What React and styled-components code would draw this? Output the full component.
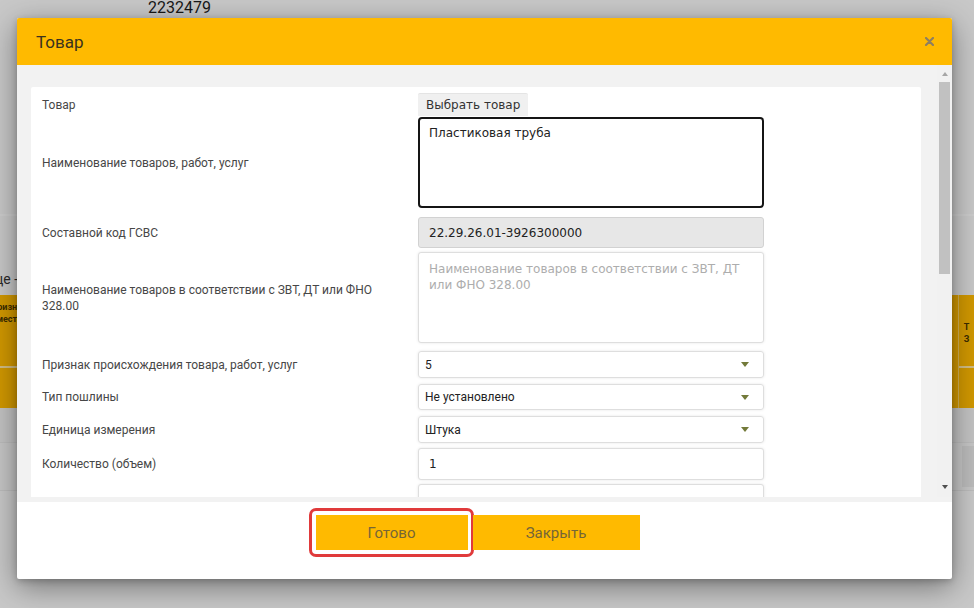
import React from "react";
import styled, { createGlobalStyle } from "styled-components";

const GlobalStyle = createGlobalStyle`
  html, body {
    margin: 0;
    padding: 0;
  }
  body {
    font-family: Roboto, "Liberation Sans", Arial, sans-serif;
    background: #f4f4f4;
    overflow: hidden;
  }
  * {
    box-sizing: border-box;
  }
`;

/* ---------- page behind the dialog ---------- */

const Page = styled.div`
  position: relative;
  width: 974px;
  height: 608px;
  overflow: hidden;
  background: #f4f4f4;
`;

const DocNumber = styled.div`
  height: 216px;
  padding-left: 148px;
  font-size: 16px;
  line-height: 16px;
  color: #1d1d1d;
  border-bottom: 2px solid #fbfbfb;
`;

const CaptionRow = styled.div`
  height: 79px;
  display: flex;
  align-items: flex-end;
  padding-bottom: 8px;
`;

const Caption = styled.div`
  width: 18px;
  display: flex;
  justify-content: flex-end;
  white-space: nowrap;
  font-size: 14px;
  color: #333;
`;

const TableHead = styled.div`
  display: flex;
  height: 113px;
  background: #ffba00;
`;

const HeadCell = styled.div`
  flex: ${(p) => (p.$grow ? 1 : "none")};
  width: ${(p) => p.$w || "auto"};
  margin-left: ${(p) => p.$ml || 0};
  display: grid;
  grid-template-rows: 73px 1fr;
  border-left: ${(p) => (p.$line ? "1px solid #ffd766" : "none")};
`;

const HeadTop = styled.div`
  padding-top: ${(p) => p.$pt || 8}px;
  font-size: 9px;
  font-weight: 700;
  line-height: 12px;
  color: #4a3600;
  text-align: center;
  border-bottom: 2px solid #ffe7a3;
`;

const BodyRow = styled.div`
  height: ${(p) => p.$h}px;
  background: ${(p) => p.$bg};
  border-bottom: 1px solid ${(p) => p.$line || "#e6e6e6"};
  display: flex;
  justify-content: flex-end;
`;

const RowBox = styled.div`
  width: 12px;
  margin: 3px 0;
  background: #e6e6e6;
`;

const Dim = styled.div`
  position: absolute;
  inset: 0;
  background: rgba(0, 0, 0, 0.18);
`;

/* ---------- dialog ---------- */

const Modal = styled.div`
  position: absolute;
  top: 18px;
  left: 17px;
  width: 935px;
  height: 561px;
  display: flex;
  flex-direction: column;
  background: #fff;
  border-radius: 2px;
  box-shadow: 0 8px 30px rgba(0, 0, 0, 0.42), 0 2px 6px rgba(0, 0, 0, 0.2);
  overflow: hidden;
`;

const Header = styled.div`
  flex: none;
  height: 47px;
  display: flex;
  align-items: center;
  justify-content: space-between;
  padding: 0 18px 0 19px;
  background: #ffba00;
`;

const Title = styled.h3`
  margin: 0;
  font-size: 17px;
  font-weight: 400;
  color: #3a321f;
`;

const Close = styled.button`
  display: flex;
  padding: 0;
  border: 0;
  background: none;
  cursor: pointer;
`;

const Body = styled.div`
  flex: 1;
  min-height: 0;
  display: flex;
  background: #f2f2f2;
`;

const Scroller = styled.div`
  flex: 1;
  overflow: hidden;
  padding: 22px 16px 0 14px;
`;

const Panel = styled.div`
  background: #fff;
  border-radius: 2px;
  padding: 6px 11px 24px;
`;

const Field = styled.div`
  display: grid;
  grid-template-columns: 376px 346px;
  align-items: center;
  margin-top: ${(p) => p.$mt || 0}px;
`;

const Label = styled.label`
  padding-right: 30px;
  font-size: 12px;
  line-height: 16px;
  color: #474747;
`;

const PickButton = styled.button`
  justify-self: start;
  height: 23px;
  padding: 0 8px;
  border: 0;
  border-top: 1px solid #e4e4e4;
  border-radius: 2px 2px 0 0;
  background: #f0f0f0;
  font: 12px "DejaVu Sans", Verdana, sans-serif;
  color: #333;
`;

const TextArea = styled.textarea`
  display: block;
  height: 91px;
  resize: none;
  font: 12px/16px "DejaVu Sans", Verdana, sans-serif;
  color: #222;
  border-radius: ${(p) => (p.$focused ? 4 : 3)}px;
  border: ${(p) => (p.$focused ? "2px solid #151515" : "1px solid #dedede")};
  padding: ${(p) => (p.$focused ? "6px 9px" : "8px 10px")};
  box-shadow: ${(p) => (p.$focused ? "none" : "0 0 3px rgba(0, 0, 0, 0.1)")};
  outline: none;

  &::placeholder {
    color: #adadad;
  }
`;

const TextInput = styled.input`
  display: block;
  height: ${(p) => p.$h || 32}px;
  padding: 0 10px;
  font: 12px "DejaVu Sans", Verdana, sans-serif;
  color: #222;
  border: 1px solid ${(p) => (p.readOnly ? "#d2d2d2" : "#dedede")};
  border-radius: 3px;
  background: ${(p) => (p.readOnly ? "#e7e7e7" : "#fff")};
  box-shadow: ${(p) => (p.readOnly ? "none" : "0 0 3px rgba(0, 0, 0, 0.1)")};
  outline: none;
`;

const Select = styled.div`
  height: ${(p) => p.$h || 27}px;
  display: flex;
  align-items: center;
  justify-content: space-between;
  padding: 0 14px 0 6px;
  font-size: 12px;
  color: #222;
  border: 1px solid #dedede;
  border-radius: 3px;
  box-shadow: 0 0 3px rgba(0, 0, 0, 0.1);
`;

const Caret = styled.span`
  width: 0;
  height: 0;
  border-left: 4px solid transparent;
  border-right: 4px solid transparent;
  border-top: 5px solid #737a3a;
`;

const Scrollbar = styled.div`
  flex: none;
  width: 15px;
  display: flex;
  flex-direction: column;
  align-items: center;
  padding: 7px 0 8px;
  background: #f1f1f1;
`;

const Arrow = styled.span`
  width: 0;
  height: 0;
  border-left: 3.5px solid transparent;
  border-right: 3.5px solid transparent;
  ${(p) =>
    p.$down
      ? "border-top: 4px solid #4f4f4f; margin-top: auto;"
      : "border-bottom: 4px solid #a6a6a6;"}
`;

const Thumb = styled.div`
  width: 11px;
  height: 192px;
  margin-top: 6px;
  background: #c1c1c1;
`;

const Footer = styled.div`
  flex: none;
  height: 82px;
  display: flex;
  justify-content: center;
  gap: 5px;
  padding: 13px 14px 0 0;
  border-top: 5px solid #f2f2f2;
`;

const ActionButton = styled.button`
  position: relative;
  width: ${(p) => p.$w}px;
  height: 35px;
  border: 0;
  background: #ffba00;
  font: 15px Roboto, "Liberation Sans", sans-serif;
  color: #766637;
  cursor: pointer;

  ${(p) =>
    p.$marked &&
    `
    &::after {
      content: "";
      position: absolute;
      inset: -7px -6px -7px -7px;
      border: 3px solid #e03a3b;
      border-radius: 7px;
    }
  `}
`;

function CloseIcon() {
  return (
    <svg width="9" height="9" viewBox="0 0 9 9">
      <path d="M1 1 L8 8 M8 1 L1 8" stroke="#8e7f60" strokeWidth="2.2" strokeLinecap="round" />
    </svg>
  );
}

export default function App() {
  return (
    <Page>
      <GlobalStyle />
      <DocNumber>2232479</DocNumber>
      <CaptionRow>
        <Caption>Товары на странице -</Caption>
      </CaptionRow>
      <TableHead>
        <HeadCell $w="60px" $ml="-21px">
          <HeadTop $pt={6}>Признак<br />места</HeadTop>
          <div />
        </HeadCell>
        <HeadCell $grow />
        <HeadCell $w="16px" $line>
          <HeadTop $pt={26}>Т<br />З</HeadTop>
          <div />
        </HeadCell>
      </TableHead>
      <BodyRow $h={35} $bg="#eeeeee" />
      <BodyRow $h={48} $bg="#f2f2f2">
        <RowBox />
      </BodyRow>
      <BodyRow $h={30} $bg="#f4f4f4" $line="#f4f4f4" />
      <BodyRow $h={40} $bg="#f4f4f4" $line="#f4f4f4" />
      <Dim />

      <Modal>
        <Header>
          <Title>Товар</Title>
          <Close aria-label="Закрыть">
            <CloseIcon />
          </Close>
        </Header>

        <Body>
          <Scroller>
            <Panel>
              <Field>
                <Label>Товар</Label>
                <PickButton>Выбрать товар</PickButton>
              </Field>
              <Field $mt={1}>
                <Label>Наименование товаров, работ, услуг</Label>
                <TextArea $focused defaultValue="Пластиковая труба" />
              </Field>
              <Field $mt={9}>
                <Label>Составной код ГСВС</Label>
                <TextInput $h={31} readOnly defaultValue="22.29.26.01-3926300000" />
              </Field>
              <Field $mt={4}>
                <Label>Наименование товаров в соответствии с ЗВТ, ДТ или ФНО 328.00</Label>
                <TextArea placeholder="Наименование товаров в соответствии с ЗВТ, ДТ или ФНО 328.00" />
              </Field>
              <Field $mt={8}>
                <Label>Признак происхождения товара, работ, услуг</Label>
                <Select>
                  5<Caret />
                </Select>
              </Field>
              <Field $mt={6}>
                <Label>Тип пошлины</Label>
                <Select $h={26}>
                  Не установлено<Caret />
                </Select>
              </Field>
              <Field $mt={6}>
                <Label>Единица измерения</Label>
                <Select>
                  Штука<Caret />
                </Select>
              </Field>
              <Field $mt={5}>
                <Label>Количество (объем)</Label>
                <TextInput defaultValue="1" />
              </Field>
              <Field $mt={4}>
                <Label>Описание</Label>
                <TextArea />
              </Field>
            </Panel>
          </Scroller>
          <Scrollbar>
            <Arrow />
            <Thumb />
            <Arrow $down />
          </Scrollbar>
        </Body>

        <Footer>
          <ActionButton $w={152} $marked>
            Готово
          </ActionButton>
          <ActionButton $w={167}>Закрыть</ActionButton>
        </Footer>
      </Modal>
    </Page>
  );
}
